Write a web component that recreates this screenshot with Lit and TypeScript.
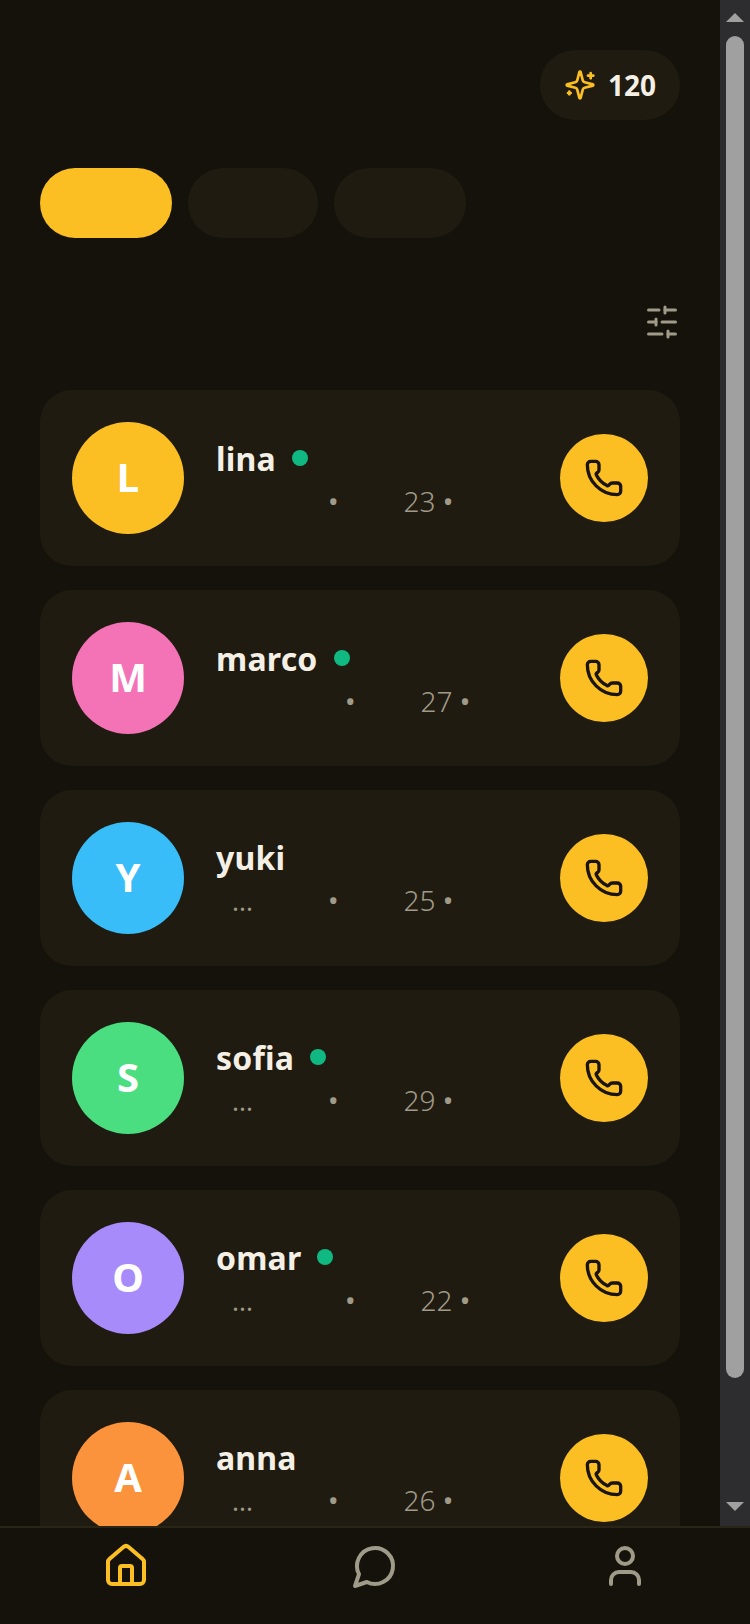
import { LitElement, html, css, svg } from "lit";
import { customElement } from "lit/decorators.js";

interface Person { name: string; color: string; online: boolean; lead: number; ell: boolean; age: number; }

const PEOPLE: Person[] = [
  { name: "lina", color: "#fbbf24", online: true, lead: 112, ell: false, age: 23 },
  { name: "marco", color: "#f472b6", online: true, lead: 129, ell: false, age: 27 },
  { name: "yuki", color: "#38bdf8", online: false, lead: 112, ell: true, age: 25 },
  { name: "sofia", color: "#4ade80", online: true, lead: 112, ell: true, age: 29 },
  { name: "omar", color: "#a78bfa", online: true, lead: 129, ell: true, age: 22 },
  { name: "anna", color: "#fb923c", online: false, lead: 112, ell: true, age: 26 },
];

const TABS = [132, 130, 132];

const icon = (size: number, body: unknown) => html`<svg class="ic" width=${size} height=${size} viewBox="0 0 24 24" fill="none" stroke="currentColor" stroke-width="2" stroke-linecap="round" stroke-linejoin="round">${body}</svg>`;

const sparkles = svg`<path d="M9.937 15.5A2 2 0 0 0 8.5 14.063l-6.135-1.582a.5.5 0 0 1 0-.962L8.5 9.936A2 2 0 0 0 9.937 8.5l1.582-6.135a.5.5 0 0 1 .963 0L14.063 8.5A2 2 0 0 0 15.5 9.937l6.135 1.581a.5.5 0 0 1 0 .964L15.5 14.063a2 2 0 0 0-1.437 1.437l-1.582 6.135a.5.5 0 0 1-.963 0z"/><path d="M20 3v4"/><path d="M22 5h-4"/><path d="M4 17v2"/><path d="M5 18H3"/>`;
const sliders = svg`<line x1="21" x2="14" y1="4" y2="4"/><line x1="10" x2="3" y1="4" y2="4"/><line x1="21" x2="12" y1="12" y2="12"/><line x1="8" x2="3" y1="12" y2="12"/><line x1="21" x2="16" y1="20" y2="20"/><line x1="12" x2="3" y1="20" y2="20"/><line x1="14" x2="14" y1="2" y2="6"/><line x1="8" x2="8" y1="10" y2="14"/><line x1="16" x2="16" y1="18" y2="22"/>`;
const phone = svg`<path d="M13.832 16.568a1 1 0 0 0 1.213-.303l.355-.465A2 2 0 0 1 17 15h3a2 2 0 0 1 2 2v3a2 2 0 0 1-2 2A18 18 0 0 1 2 4a2 2 0 0 1 2-2h3a2 2 0 0 1 2 2v3a2 2 0 0 1-.8 1.6l-.468.351a1 1 0 0 0-.292 1.233 14 14 0 0 0 6.392 6.384"/>`;
const home = svg`<path d="M15 21v-8a1 1 0 0 0-1-1h-4a1 1 0 0 0-1 1v8"/><path d="M3 10a2 2 0 0 1 .709-1.528l7-5.999a2 2 0 0 1 2.582 0l7 5.999A2 2 0 0 1 21 10v9a2 2 0 0 1-2 2H5a2 2 0 0 1-2-2z"/>`;
const chat = svg`<path d="M7.9 20A9 9 0 1 0 4 16.1L2 22Z"/>`;
const user = svg`<path d="M19 21v-2a4 4 0 0 0-4-4H9a4 4 0 0 0-4 4v2"/><circle cx="12" cy="7" r="4"/>`;

@customElement("app-root")
export class AppRoot extends LitElement {
  static styles = css`
    :host {
      display: flex;
      flex-direction: column;
      height: 1624px;
      background: #14120b;
      font-family: "Noto Sans", "Open Sans", sans-serif;
      color: #f5f0e6;
    }
    .body {
      display: flex;
      height: 1526px;
      flex: none;
      overflow: hidden;
    }
    .bar {
      flex: none;
      width: 30px;
      box-sizing: border-box;
      background: #2d2d2f;
      display: flex;
      flex-direction: column;
      align-items: center;
      padding: 13px 0 15px;
    }
    .arrow { display: block; flex: none; fill: #a0a0a0; }
    .thumb {
      flex: none;
      width: 18px;
      height: 1342px;
      margin-top: 14px;
      border-radius: 9px;
      background: #a0a0a0;
    }
    .arrow.down { margin-top: auto; }
    .content {
      flex: 1;
      min-width: 0;
      display: flex;
      flex-direction: column;
      padding: 50px 40px 0;
    }
    .top { display: flex; justify-content: flex-end; }
    .coins {
      display: flex;
      align-items: center;
      gap: 12px;
      height: 70px;
      padding: 0 24px;
      border-radius: 35px;
      background: #1f1b10;
      font-size: 28px;
      font-weight: 700;
    }
    .ic { display: block; flex: none; }
    .coins .ic { color: #fbbf24; }
    .tabs { display: flex; gap: 16px; margin-top: 48px; }
    .tab { height: 70px; border-radius: 35px; background: #1f1b10; }
    .tab.on { background: #fbbf24; }
    .filter { display: flex; justify-content: flex-end; margin-top: 66px; color: #a09a88; }
    .list { display: flex; flex-direction: column; gap: 24px; margin-top: 50px; }
    .card {
      flex: none;
      display: flex;
      align-items: center;
      gap: 32px;
      padding: 32px;
      border-radius: 32px;
      background: #1f1b10;
    }
    .avatar {
      flex: none;
      width: 112px;
      height: 112px;
      box-sizing: border-box;
      padding-bottom: 4px;
      border-radius: 50%;
      display: flex;
      align-items: center;
      justify-content: center;
      color: #fff;
      font-size: 40px;
      font-weight: 700;
    }
    .info { flex: 1; min-width: 0; }
    .name-row { display: flex; align-items: center; gap: 16px; }
    .name { font-size: 32px; font-weight: 700; line-height: 44px; letter-spacing: 0.2px; }
    .online { width: 16px; height: 16px; margin-top: -3px; border-radius: 50%; background: #10b981; }
    .meta {
      display: flex;
      margin-top: 2px;
      font-size: 28px;
      line-height: 36px;
      color: #a09a88;
      white-space: pre;
    }
    .lead { flex: none; padding-left: 16px; box-sizing: border-box; font-size: 26px; line-height: 38px; }
    .age { margin-left: 65px; }
    .num { font-weight: 300; }
    .call {
      flex: none;
      width: 88px;
      height: 88px;
      border-radius: 50%;
      background: #fbbf24;
      color: #1a1508;
      display: flex;
      align-items: center;
      justify-content: center;
    }
    nav {
      flex: none;
      height: 98px;
      box-sizing: border-box;
      border-top: 2px solid #2a2617;
      display: flex;
      justify-content: space-around;
      padding: 14px 0 0 1px;
      color: #a09a88;
      background: #14120b;
    }
    nav .on { color: #fbbf24; }
  `;

  render() {
    return html`
      <div class="body">
        <div class="content">
          <div class="top">
            <div class="coins">${icon(32, sparkles)}<span>120</span></div>
          </div>
          <div class="tabs">
            ${TABS.map((w, i) => html`<div class="tab ${i === 0 ? "on" : ""}" style="width:${w}px"></div>`)}
          </div>
          <div class="filter">${icon(36, sliders)}</div>
          <div class="list">
            ${PEOPLE.map((p) => html`
              <div class="card">
                <div class="avatar" style="background:${p.color}">${p.name[0].toUpperCase()}</div>
                <div class="info">
                  <div class="name-row">
                    <span class="name">${p.name}</span>
                    ${p.online ? html`<span class="online"></span>` : ""}
                  </div>
                  <div class="meta">
                    <span class="lead" style="width:${p.lead}px">${p.ell ? "..." : ""}</span><span>•</span><span class="age"><span class="num">${p.age}</span> •</span>
                  </div>
                </div>
                <div class="call">${icon(40, phone)}</div>
              </div>
            `)}
          </div>
        </div>
        <div class="bar">
          <svg class="arrow" width="18" height="9" viewBox="0 0 18 9"><polygon points="9,0 18,9 0,9"/></svg>
          <div class="thumb"></div>
          <svg class="arrow down" width="18" height="9" viewBox="0 0 18 9"><polygon points="0,0 18,0 9,9"/></svg>
        </div>
      </div>
      <nav>
        <div class="on">${icon(48, home)}</div>
        <div>${icon(48, chat)}</div>
        <div>${icon(48, user)}</div>
      </nav>
    `;
  }
}
